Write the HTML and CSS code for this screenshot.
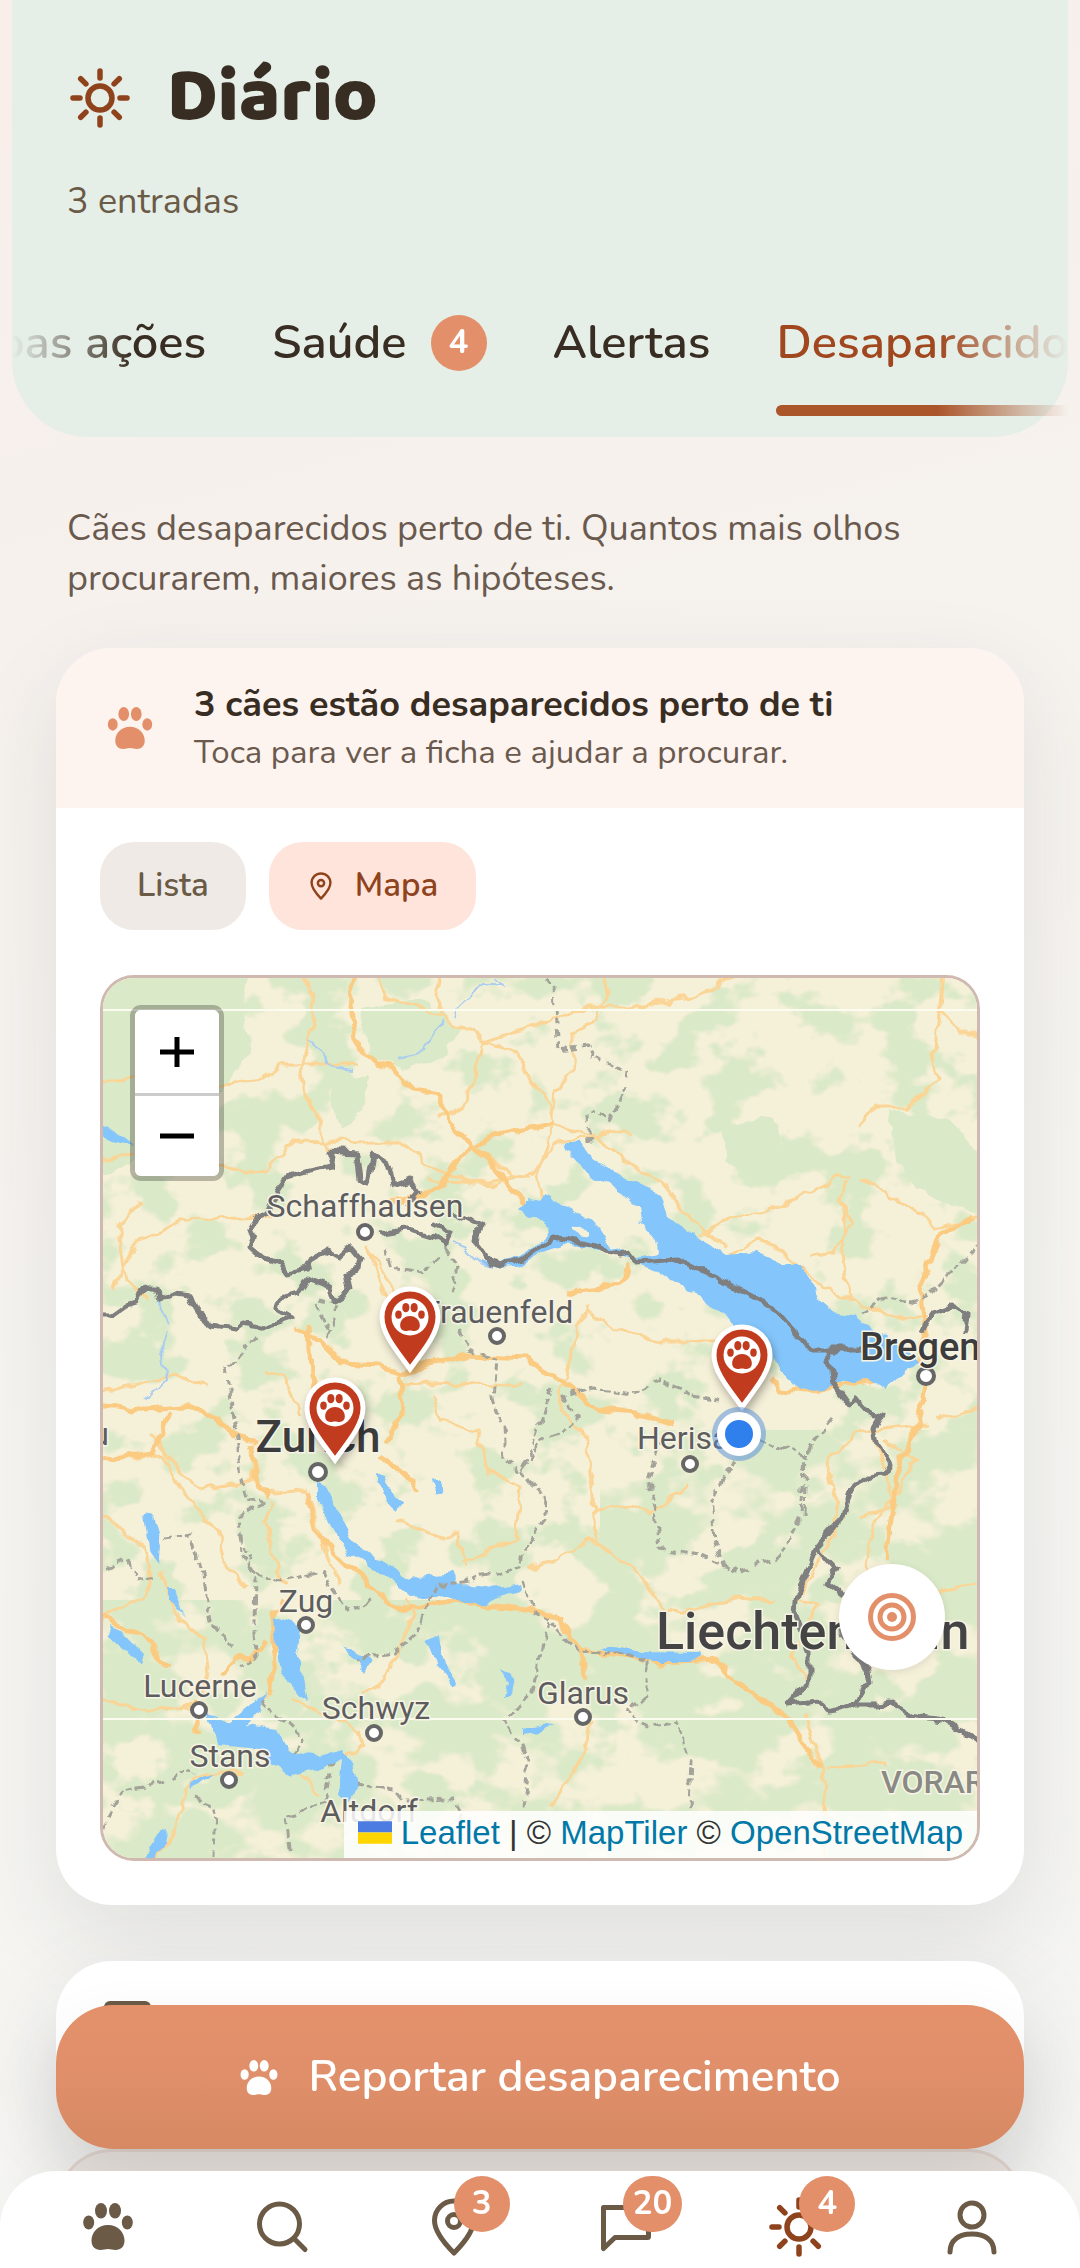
FILE: index.html
```
<!DOCTYPE html>
<html lang="pt">
<head>
    <meta charset="UTF-8">
    <meta name="viewport" content="width=device-width, initial-scale=1.0">
    <title>Diário</title>
    <link rel="stylesheet" href="styles.css">
</head>
<body>

<!-- shared icons -->
<svg class="sprite" width="0" height="0" aria-hidden="true">
    <symbol id="paw" viewBox="0 0 50 47">
        <ellipse cx="5.7" cy="19.500" rx="5.500" ry="7"/>
        <ellipse cx="18" cy="7.800" rx="6" ry="7.800"/>
        <ellipse cx="32" cy="7.800" rx="6" ry="7.800"/>
        <ellipse cx="44.300" cy="19.500" rx="5.500" ry="7"/>
        <path d="M25 22c10 0 16.500 7.500 16.500 15.500 0 6-3.500 9.500-9 9.500-3 0-5-1-7.500-1s-4.500 1-7.500 1c-5.500 0-9-3.500-9-9.500C8.500 29.500 15 22 25 22z"/>
    </symbol>
    <symbol id="sun" viewBox="-3 -3 66 66">
        <g fill="none" stroke="currentColor" stroke-width="5.500" stroke-linecap="round">
            <circle cx="30" cy="30" r="12"/>
            <path d="M30 3v7M30 50v7M3 30h7M50 30h7M10.700 10.700l5.200 5.200M44.100 44.100l5.200 5.200M10.700 49.300l5.200-5.200M44.100 15.900l5.200-5.200"/>
        </g>
    </symbol>
    <symbol id="pin" viewBox="0 0 46 58">
        <g fill="none" stroke="currentColor" stroke-width="5" stroke-linejoin="round">
            <path d="M23 55C14 46 3.500 34 3.500 22.500a19.500 19.500 0 0 1 39 0C42.500 34 32 46 23 55z"/>
            <circle cx="23" cy="23" r="6.500"/>
        </g>
    </symbol>
    <symbol id="marker" viewBox="0 0 62 88">
        <path d="M31 3C16 3 3 15 3 31c0 17 15 34 28 52 13-18 28-35 28-52C59 15 46 3 31 3z" fill="#c13b1f" stroke="#fff" stroke-width="5"/>
        <circle cx="31" cy="31" r="18.500" fill="#fff"/>
        <use href="#paw" x="16" y="17" width="30" height="28" fill="#c13b1f"/>
    </symbol>
</svg>

<div class="screen">
    <header class="header">
        <h1 class="header-title">
            <svg class="icon-sun"><use href="#sun"/></svg>
            Diário
        </h1>
        <p class="header-count">3 entradas</p>
        <nav class="tabs">
            <a class="tab" href="#acoes">Boas ações</a>
            <a class="tab" href="#saude">Saúde <span class="badge">4</span></a>
            <a class="tab" href="#alertas">Alertas</a>
            <a class="tab active" href="#desaparecidos">Desaparecidos</a>
        </nav>
    </header>

    <main class="content">
        <p class="intro">Cães desaparecidos perto de ti. Quantos mais olhos procurarem, maiores as hipóteses.</p>

        <section class="card">
            <div class="card-head">
                <svg class="card-paw"><use href="#paw"/></svg>
                <div>
                    <h2 class="card-title">3 cães estão desaparecidos perto de ti</h2>
                    <p class="card-sub">Toca para ver a ficha e ajudar a procurar.</p>
                </div>
            </div>
            <div class="card-body">
                <div class="pills">
                    <button class="pill" type="button">Lista</button>
                    <button class="pill selected" type="button">
                        <svg class="pill-pin"><use href="#pin"/></svg>
                        Mapa
                    </button>
                </div>

                <div class="map">
                    <svg class="map-canvas" viewBox="103 978 874 880" preserveAspectRatio="xMidYMid slice">
                        <defs>
                            <filter id="forest" x="0" y="0" width="100%" height="100%" color-interpolation-filters="sRGB">
                                <feTurbulence type="fractalNoise" baseFrequency="0.017 0.021" numOctaves="4" seed="8"/>
                                <feColorMatrix values="0 0 0 0 0.855  0 0 0 0 0.914  0 0 0 0 0.780  10 0 0 0 -5.1"/>
                            </filter>
                            <filter id="alps" x="0" y="0" width="100%" height="100%" color-interpolation-filters="sRGB">
                                <feTurbulence type="fractalNoise" baseFrequency="0.012 0.016" numOctaves="4" seed="21"/>
                                <feColorMatrix values="0 0 0 0 0.855  0 0 0 0 0.914  0 0 0 0 0.780  10 0 0 0 -4.5"/>
                            </filter>
                            <filter id="rough" filterUnits="userSpaceOnUse" x="93" y="968" width="894" height="900">
                                <feTurbulence type="fractalNoise" baseFrequency="0.06" numOctaves="2" seed="3"/>
                                <feDisplacementMap in="SourceGraphic" scale="12" xChannelSelector="R" yChannelSelector="G"/>
                            </filter>
                        </defs>
                        <rect x="103" y="978" width="874" height="880" fill="#f5f0d8"/>
                        <rect x="103" y="978" width="874" height="880" filter="url(#forest)"/>
                        <rect x="103" y="1600" width="874" height="258" filter="url(#alps)"/>
                        <rect x="600" y="1430" width="377" height="170" filter="url(#alps)"/>

                        <g filter="url(#rough)">
                            <g fill="#dae9c7">
                                <path d="M93 968h155l-8 40 12 40-30 42-60 60-69 30z"/>
                                <path d="M360 1010l62-12 40 30-20 30-40 10-32-12z"/>
                                <path d="M332 1085l36-12-4 40-24 14-10-22z"/>
                                <path d="M725 1125l50-10 8 40-32 22-26-16z"/>
                                <path d="M890 1110l60 10 37 40v60l-70-30-20-30z"/>
                            </g>
                            <g class="road">
                                <path d="M93 1085l50-10 60 12 58-8 20-15h75M93 1160l50-5 50 2 40 12 32 2 30-30 70 2 40 0 25 25 45 15 60-10 22-30 60-12 15 5"/>
                                <path d="M300 970l15 33-6 40-8 30 4 22 14 25 12 35M140 1200l-22 25 8 55 22 20M93 1395l80-20 35 10M112 1290l22-44 48-26 90-3"/>
                                <path d="M375 970l8 28 45 12 25 12 26 12 4 8 50-15 55-20h42l60-10 45-22 42-10M437 970l4 48"/>
                                <path d="M483 1042l-16 60-10 10-20 5M483 1042l34 10 14 30 20 25 2 20-5 20-10 30 4 25 14 10 25 20"/>
                                <path d="M607 970l-2 30-14 25-18 7v40l-18 20-3 25M553 1125l40 10 40 30 30 16 16 26 26 24 22 18"/>
                                <path d="M475 1148l36 28h20M511 1176l-14 8-70-4"/>
                                <path d="M700 1236l30-18 50-12 55-28 15-2M943 970l-4 45-6 50 5 15-25 22-10 5-30 0-17 20"/>
                                <path d="M939 1010l20 20 28 10M860 1178l60 36 15 15 52-14M847 1180l-6 22 10 20-18 30-25 5M845 1210l-4 45 10 45"/>
                                <path d="M800 1265l18 18 40 20 50 17 20-5M730 1255l28-14 25 10 15 14"/>
                                <path d="M587 1305l-16 50-12 40 8 20 18 20 8 60 2 50M585 1310l28 18 45 12h60"/>
                                <path d="M400 1385l60-2 65 4M435 1395l5 25 40 12 8 40 32 15-4 50-30 15-25 8M93 1460l70-5 25 45 30 30 10 40 20 18"/>
                                <path d="M365 1245l40 60M365 1245l20 50 6 10M263 1372l22 6 15 38"/>
                                <path d="M250 1445l4 35 12 15 38-6M254 1480l-55 10-50-55M93 1510l50 37 10 30-10 20-50 25M160 1570l20 50 25 20 4 30-8 25"/>
                                <path d="M275 1500l-10 20 10 40 10 25M310 1500l18 60 12 25M405 1600l10 15-25 55-10 15-20 10"/>
                                <path d="M395 1518l40 18h25l6 30M590 1540l-30 20-32 8M590 1540l45 28 30 40 15 5 55-15 40 3"/>
                                <path d="M590 1720l-4 30-18 30-20 28M595 1510l30-3 25 7 40-30"/>
                                <path d="M805 1715l18 55 4 50v48M827 1768l60-5M925 1423l-70 10-28 30 10 40-2 30-35 60M875 1437l20 70-35 10"/>
                                <path d="M885 1440l30 20-15 30-25 30-12 60-10 35M935 1420l52-14M940 1590l47-8M797 1600l20 5-8 20-18 30 15 25"/>
                                <path d="M93 1695l40 14 60-3M272 1690l-20 20M290 1700l40 15 28 15 5 15-20 12-40 12M300 1775l20 20M243 1773l-20-2-30 5-10 25-15 40-14 18"/>
                            </g>
                            <g class="road major">
                                <path d="M355 970l-4 38 7 40 20 15 15 5 20 22 25 4 12 30 30 28 30 35 22 22"/>
                                <path d="M473 1147l-22 20-8 20-25 10-30 4M473 1147l20-12 60-12"/>
                                <path d="M293 1328l25 10 25 25 35 2 25 8 25-10 40-8 55 3 35 20 22 18 20 14 35 3 40 12"/>
                                <path d="M400 1375l2 40-16 30M93 1403l40 8 50-4 22 3 30 25 20 8M93 1460l60-7 12-25 5-15M380 1455l30 25 10 12M250 1445l10 45 10 8"/>
                                <path d="M310 1325l2 50 12 40M305 1490l12 45 30 30 40 35 20 10 50-10 20 5 50 5 35 10"/>
                                <path d="M555 1615l25 35 6 30M580 1650l80 13 58-3 10 15 50 35 10 8 32 50"/>
                                <path d="M627 1263l-5 20-20 4-35 5M772 1378l8 12 28 2 60-12 50-20 8-30-6-40 12-35 10-22 30-15"/>
                                <path d="M930 1370l-14 60-18 40-12 90M195 1702l3 32M268 1695l8-50-2-30 10-15M220 1673l15-15 15 2 18-20M93 1612l50 25 25 30"/>
                            </g>

                            <g fill="#84c6fb">
                                <path d="M565 1150l2-7 13-1 13 18 24 13 16 7 27 13 7 24 30 20 30 18 30-3 26 12 17 1 12 18 5 17 13 12 23 3 20 12 24 16 20 20-20 12-9 15-18-10-30 2-17 8-23 2-20-19-10-20-30-26-27-20-16-14-30-16-24-12-6-8 20-4-2-13-15-17-2-16-16-15-29-15-20-17z"/>
                                <path d="M518 1207l12-8 8 2 5-6 24 12 33 20 13 20 17 8v4l-30-9-37-5-23 8-23 14-20 1-17-5v-4l17 5 23-9 24-16 6-10-20-13z"/>
                                <path d="M317 1482l10 5 10 26 16 30 27 17 30 18 43-5 4 10 33 5 32-5-2 7-40 15-17-2-16-8-37 3-30-26-30-19-13-20-20-33z"/>
                                <path d="M375 1473l9 3 18 29-5 6-7-6-15-22zM433 1480l7-2 6 14-8 5zM145 1513l7 2 10 32-2 18-10-15zM168 1588h7l10 29-15-17zM107 1623l13 7 23 23-3 9-30-22z"/>
                                <path d="M275 1617l25 10-2 26 10 47-26-23-5-30zM342 1648l15 2 13 13-5 10-10-14zM427 1643l13-8 2 15 6 20 10 15-4 3-17-21zM500 1670l13 7-3 20-6 0 3-14zM523 1728l30-6-13 11-17 2zM600 1650l10-5 30 7 60 1 2 5-12 5-37 0z"/>
                                <path d="M207 1713l23 9 35-29-5 17-13 15 30 5 10 20 33 7 23-7 9 13 5 24-9 16-10-6 4-37-19 7-26 8-27-12-10-14-43-4-4-20zM190 1780l23-8-20 15zM142 1860l18-27 7-3-2 13-12 17zM93 1120l42 24-18-3-24-8z"/>
                            </g>
                            <ellipse cx="580" cy="1231" rx="9" ry="4" fill="#f5f0d8" transform="rotate(25 580 1231)"/>
                            <path class="river" d="M495 978l8 8-20-2-12 14-12 8-4 10M310 1040l12 10 10 16 20 3M395 1058l30-6 10-20 10-10M452 1244l12 4 15 15 14 4M155 1300l14 22M168 1330l-6 25 4 25-20 20"/>

                            <g class="canton">
                                <path d="M540 970l14 18 2 40 2 22 30-4 4 12 20 8 14 8-3 22-14 24-14-10-8 6 2 28"/>
                                <path d="M860 1312l24-14 30 4 16-8 50-50M255 1335l-16 20-12 14 4 30 6 40 4 40 6 20 18 5-26 10 2 40 10 16 30 10 40-8 28 38 22-8"/>
                                <path d="M240 1535l15 40-1 50 4 30-18 14M165 1540l28-4 10 40 10 50 22 22M107 1568l20-8 10 20 20-4M385 1250l6 18 30 5 20-18M445 1248l14 20-8 25M320 1300l18 4-10 30-12-30"/>
                                <path d="M460 1330l10 20 26 8-3 40 10 30 2 30 16 14 20-30 24-12 14-14-16-18 30-10 40 6 25-14 30 14 30 6M552 1388l-20 60-10 20 20 30 4 20-22 30-4 20-60 15-22 0-12 20-8 30-24 20-40 6M524 1580l10 34 14 6 30 32 40 2 28 8v34l-20 14 20 16 30-6 14 40-2 50M548 1622l-16 70-28 30 24 40-4 46"/>
                                <path d="M660 1440l-12 40 8 30 4 38 40 6 40 18 40-16 20-40 4-60-50-20-30-20M736 1460l-26 40 4 40 10 26M804 1515l2-60 30-40M103 1826l20-36 40-8 30-12M195 1798l20 8-2 50M355 1785l40 6 8 10 50-2 10 20M290 1848l-4-30 40-15 6-40M262 1700l42 40-10 14"/>
                            </g>
                            <g class="border">
                                <path d="M93 1315h20l14-10 10-3 10-14h8l3 12 15-7 17 2 7 18 16 12 24 3 8-6 18 5 30-10-16-9 3-10 17-5 10-15 23 9 5 16 10-6 5-7-3-17 11-3 2-10-10-12-10 9-13-5-17 10-3 6-20 4-7-9-17-5-13-11 3-10-3-7 7-12 10-5 10-23 10-13 20-6 26-4-4-16 28 2 3 28 7 3 5-30 15 10 6 22 17-5 8 12-10 12M455 1214l25 13-5 13 15 23 10 3 23-8 30-20 47 9 20 8 10-2 7 9 43-3 93 48 37 43h50M380 1233l27-4 26 8 12 8 5-13-17-9"/>
                                <path d="M827 1350l6 32 19 25 5-7 8 10 17 5-7 12 3 16 12 20-7 12-16 2-17 16-7 24-26 30-20 46-2 20 15 40v27l-23 25 33-3 10 11 25-8 5-15 10-7-2-13-28-40M817 1547l18 21-8 15 15 12M855 1705l22 0 13-2 20 12 33 5 41 25M923 1333l10-20 17-6 17 6-2 20"/>
                            </g>
                        </g>

                        <!-- tile seams -->
                        <path d="M103 1010h874M103 1719h874" stroke="#fcfbf0" stroke-width="2"/>

                        <g class="towns">
                            <circle cx="365" cy="1232" r="7"/>
                            <circle cx="497" cy="1336" r="7"/>
                            <circle cx="318" cy="1472" r="8"/>
                            <circle cx="926" cy="1376" r="8"/>
                            <circle cx="690" cy="1464" r="7"/>
                            <circle cx="306" cy="1625" r="7"/>
                            <circle cx="199" cy="1710" r="7"/>
                            <circle cx="374" cy="1733" r="7"/>
                            <circle cx="229" cy="1780" r="7"/>
                            <circle cx="583" cy="1717" r="7"/>
                        </g>
                        <g class="labels">
                            <text x="365" y="1217" text-anchor="middle">Schaffhausen</text>
                            <text x="498" y="1323" text-anchor="middle">Frauenfeld</text>
                            <text x="637" y="1449">Herisau</text>
                            <text x="306" y="1612" text-anchor="middle">Zug</text>
                            <text x="200" y="1697" text-anchor="middle">Lucerne</text>
                            <text x="376" y="1719" text-anchor="middle">Schwyz</text>
                            <text x="230" y="1767" text-anchor="middle">Stans</text>
                            <text x="369" y="1822" text-anchor="middle">Altdorf</text>
                            <text x="583" y="1704" text-anchor="middle">Glarus</text>
                            <text x="109" y="1445" text-anchor="end">Aarau</text>
                            <text class="city big" x="318" y="1452" text-anchor="middle">Zurich</text>
                            <text class="city" x="860" y="1360">Bregenz</text>
                            <text class="country" x="656" y="1649">Liechtenstein</text>
                            <text class="region" x="881" y="1793">VORARLBERG</text>
                        </g>
                    </svg>

                    <button class="marker marker-winterthur" type="button" aria-label="Cão desaparecido"><svg><use href="#marker"/></svg></button>
                    <button class="marker marker-zurich" type="button" aria-label="Cão desaparecido"><svg><use href="#marker"/></svg></button>
                    <button class="marker marker-stgallen" type="button" aria-label="Cão desaparecido"><svg><use href="#marker"/></svg></button>
                    <span class="me"></span>

                    <div class="zoom">
                        <button class="zoom-btn" type="button" aria-label="Aproximar"><svg viewBox="0 0 34 34"><path d="M0 17h34M17 2v30"/></svg></button>
                        <button class="zoom-btn" type="button" aria-label="Afastar"><svg viewBox="0 0 34 34"><path d="M0 17h34"/></svg></button>
                    </div>

                    <button class="locate" type="button" aria-label="A minha localização">
                        <svg viewBox="0 0 48 48">
                            <circle cx="24" cy="24" r="21.500"/>
                            <circle cx="24" cy="24" r="12"/>
                            <circle class="dot" cx="24" cy="24" r="5"/>
                        </svg>
                    </button>

                    <div class="attribution">
                        <svg class="flag" viewBox="0 0 12 8"><path fill="#4C7BE1" d="M0 0h12v4H0z"/><path fill="#FFD500" d="M0 4h12v4H0z"/></svg>
                        <a href="#leaflet">Leaflet</a> | © <a href="#maptiler">MapTiler</a> © <a href="#osm">OpenStreetMap</a>
                    </div>
                </div>
            </div>
        </section>

        <section class="card card-next">
            <span class="card-next-icon"></span>
        </section>
        <section class="card card-last"></section>
    </main>

    <div class="dock">
        <button class="cta" type="button">
            <svg class="cta-paw"><use href="#paw"/></svg>
            Reportar desaparecimento
        </button>
        <nav class="bottom-nav">
            <a href="#inicio" aria-label="Início"><svg class="nav-paw"><use href="#paw"/></svg></a>
            <a href="#pesquisa" aria-label="Pesquisa">
                <svg class="nav-icon" viewBox="0 0 60 60"><circle cx="28.500" cy="27" r="20"/><path d="M43 41.500L54 52.500"/></svg>
            </a>
            <a href="#locais" aria-label="Locais"><svg class="nav-pin"><use href="#pin"/></svg><span class="badge">3</span></a>
            <a href="#mensagens" aria-label="Mensagens">
                <svg class="nav-icon" viewBox="0 0 60 60"><path d="M7.500 10.500h45v29a1 1 0 0 1-1 1H19L7.500 51.500z"/></svg>
                <span class="badge">20</span>
            </a>
            <a class="current" href="#diario" aria-label="Diário"><svg class="nav-icon nav-sun"><use href="#sun"/></svg><span class="badge">4</span></a>
            <a href="#perfil" aria-label="Perfil">
                <svg class="nav-icon" viewBox="0 0 60 60"><circle cx="30" cy="18" r="12"/><path d="M8 55c0-12 9-18 22-18s22 6 22 18"/></svg>
            </a>
        </nav>
    </div>
</div>

</body>
</html>
```
FILE: styles.css
```
* {
    box-sizing: border-box;
}

body, h1, h2, p {
    margin: 0;
}

body {
    font-family: Nunito, Lato, sans-serif;
    font-size: 36px;
    line-height: 50px;
    color: #382d22;
    background: #f6f1ec;
}

button {
    border: 0;
    padding: 0;
    font: inherit;
    color: inherit;
    cursor: pointer;
}

a {
    color: inherit;
    text-decoration: none;
}

svg {
    display: block;
    flex: none;
    fill: currentColor;
}

.sprite {
    position: absolute;
}

.screen {
    height: 100vh;
    overflow: hidden;
    background: linear-gradient(165deg, #f8eeea 0, #f6f1ed 25%, #f6f5f1 60%, #f4f4f2 100%);
}

/* header */
.header {
    margin: 0 12px;
    padding-top: 52px;
    border-radius: 0 0 76px 76px;
    background: #e5eee7;
}

.header-title {
    display: flex;
    align-items: center;
    gap: 34px;
    padding: 0 55px;
    font-family: "Baloo 2", "Noto Sans", sans-serif;
    font-size: 76px;
    line-height: 92px;
    font-weight: 800;
}

.icon-sun {
    width: 66px;
    height: 66px;
    color: #8f431c;
}

.header-count {
    margin-top: 33px;
    padding: 0 55px;
    color: #6a5a46;
}

.tabs {
    display: flex;
    gap: 66px;
    margin-top: 65px;
    padding-bottom: 21px;
    overflow: hidden;
    -webkit-mask-image: linear-gradient(90deg, transparent 0, #000 120px, #000 calc(100% - 130px), transparent);
    mask-image: linear-gradient(90deg, transparent 0, #000 120px, #000 calc(100% - 130px), transparent);
}

.tab {
    display: flex;
    flex: none;
    align-items: center;
    gap: 24px;
    height: 124px;
    padding-bottom: 12px;
    border-bottom: 11px solid transparent;
    font-size: 47px;
    font-weight: 600;
}

.tab:first-child {
    margin-left: -46px;
}

.tab.active {
    position: relative;
    color: #a0471f;
}

.tab.active::after {
    content: "";
    position: absolute;
    left: 0;
    right: 0;
    bottom: -11px;
    height: 11px;
    border-radius: 6px;
    background: #ab552b;
}

.badge {
    min-width: 56px;
    height: 56px;
    padding: 0 10px;
    border-radius: 28px;
    background: #e3906a;
    color: #fff;
    font-size: 33px;
    line-height: 56px;
    font-weight: 700;
    text-align: center;
}

/* content */
.content {
    padding: 67px 56px 0;
}

.intro {
    padding: 0 11px;
    color: #6a5a4e;
}

.card {
    margin-top: 44px;
    border-radius: 56px;
    background: #fff;
    box-shadow: 0 30px 90px rgba(40, 50, 60, .1);
}

.card-head {
    display: flex;
    align-items: center;
    gap: 41px;
    height: 160px;
    padding: 0 51px;
    border-radius: 56px 56px 0 0;
    background: #fdf3ef;
}

.card-paw {
    width: 46px;
    height: 42px;
    color: #e3906a;
}

.card-title {
    font-size: 36px;
    line-height: 50px;
    font-weight: 700;
}

.card-sub {
    font-size: 33px;
    line-height: 46px;
    color: #6a5a4e;
}

.card-body {
    padding: 34px 44px 44px;
}

.pills {
    display: flex;
    gap: 23px;
}

.pill {
    display: flex;
    align-items: center;
    gap: 22px;
    height: 88px;
    padding: 0 37px;
    border-radius: 34px;
    background: #efeae6;
    color: #6a5a46;
    font-size: 33px;
    font-weight: 600;
}

.pill.selected {
    padding: 0 38px 0 40px;
    background: #fee4da;
    color: #8f431c;
}

.pill-pin {
    width: 24px;
    height: 28px;
}

/* map */
.map {
    position: relative;
    margin-top: 45px;
    border: 3px solid #cfb9b0;
    border-radius: 34px;
    overflow: hidden;
}

.map-canvas {
    width: 100%;
    height: auto;
}

.road {
    fill: none;
    stroke: #fbd596;
    stroke-width: 3;
    stroke-linejoin: round;
}

.road.major {
    stroke: #fccb82;
    stroke-width: 5;
}

.river {
    fill: none;
    stroke: #a9cdf0;
    stroke-width: 2;
}

.canton {
    fill: none;
    stroke: #a3a39a;
    stroke-width: 3;
    stroke-dasharray: 7 4;
}

.border {
    fill: none;
    stroke: #7f7f7f;
    stroke-width: 5;
    stroke-linejoin: round;
}

.towns {
    fill: #fff;
    stroke: #666;
    stroke-width: 4;
}

.labels {
    fill: #5d5d5d;
    stroke: #f7f4e6;
    stroke-width: 3;
    paint-order: stroke;
    font-family: Roboto, sans-serif;
    font-size: 32px;
}

.labels .city {
    fill: #3c3c3c;
    font-size: 38px;
    font-weight: 500;
}

.labels .big {
    font-size: 44px;
}

.labels .country {
    fill: #444;
    font-size: 52px;
    font-weight: 500;
}

.labels .region {
    fill: #8a8a84;
    font-weight: 500;
}

.marker {
    position: absolute;
    width: 62px;
    height: 88px;
    background: none;
    filter: drop-shadow(2px 5px 4px rgba(0, 0, 0, .3));
}

.marker svg {
    width: 62px;
    height: 88px;
}

.marker-winterthur {
    left: 276px;
    top: 308px;
}

.marker-zurich {
    left: 201px;
    top: 399px;
}

.marker-stgallen {
    left: 608px;
    top: 346px;
}

.me {
    position: absolute;
    left: 614px;
    top: 434px;
    width: 44px;
    height: 44px;
    border: 8px solid #fff;
    border-radius: 50%;
    background: #2f80ed;
    box-shadow: 0 0 0 5px rgba(80, 140, 220, .5);
}

.zoom {
    position: absolute;
    left: 27px;
    top: 27px;
    border: 5px solid rgba(0, 0, 0, .25);
    border-radius: 11px;
    background-clip: padding-box;
    overflow: hidden;
}

.zoom-btn {
    display: flex;
    align-items: center;
    justify-content: center;
    width: 84px;
    height: 83px;
    background: #fff;
}

.zoom-btn + .zoom-btn {
    border-top: 3px solid #ccc;
}

.zoom-btn svg {
    width: 34px;
    height: 34px;
    stroke: #000;
    stroke-width: 5;
}

.locate {
    position: absolute;
    right: 32px;
    bottom: 188px;
    display: flex;
    align-items: center;
    justify-content: center;
    width: 106px;
    height: 106px;
    border-radius: 50%;
    background: #fff;
    box-shadow: 0 2px 8px rgba(0, 0, 0, .1);
    color: #e3906a;
}

.locate svg {
    width: 48px;
    height: 48px;
    fill: none;
    stroke: currentColor;
    stroke-width: 5;
}

.locate .dot {
    fill: currentColor;
    stroke: none;
}

.attribution {
    position: absolute;
    right: 0;
    bottom: 0;
    padding: 0 14px 3px;
    background: rgba(255, 255, 255, .85);
    font-family: "Liberation Sans", Arial, sans-serif;
    font-size: 33px;
    line-height: 44px;
    color: #333;
    white-space: nowrap;
}

.attribution a {
    color: #0078a8;
}

.flag {
    display: inline;
    width: 34px;
    height: 23px;
}

.card-next {
    height: 150px;
    margin-top: 56px;
    padding: 40px 48px;
}

.card-next-icon {
    display: block;
    width: 47px;
    height: 40px;
    border-radius: 6px;
    background: #6a5a46;
}

.card-last {
    height: 200px;
    margin-top: 38px;
    border: 3px solid #dfd2cb;
    background: #e8e2dd;
}

/* dock */
.dock {
    position: fixed;
    left: 0;
    right: 0;
    bottom: 0;
}

.cta {
    display: flex;
    align-items: center;
    justify-content: center;
    gap: 31px;
    width: calc(100% - 112px);
    height: 144px;
    margin: 0 56px 22px;
    border-radius: 58px;
    background: linear-gradient(#e4916b, #df8f6a 50%, #d68963);
    box-shadow: 0 36px 70px rgba(30, 35, 45, .12);
    color: #fff;
    font-size: 44px;
    font-weight: 600;
}

.cta-paw {
    width: 38px;
    height: 35px;
}

.bottom-nav {
    position: relative;
    display: flex;
    height: 97px;
    padding: 0 22px;
    border-radius: 56px 56px 0 0;
    background: #fff;
    color: #6a5a46;
}

.bottom-nav a {
    position: relative;
    display: flex;
    flex: 1;
    align-items: center;
    justify-content: center;
    padding-top: 14px;
}

.bottom-nav .current {
    color: #8f431c;
}

.bottom-nav .badge {
    position: absolute;
    right: calc(50% - 56px);
    top: 5px;
}

.nav-icon {
    width: 60px;
    height: 60px;
    fill: none;
    stroke: currentColor;
    stroke-width: 5;
    stroke-linecap: round;
    stroke-linejoin: round;
}

.nav-sun {
    width: 66px;
    height: 66px;
}

.nav-paw {
    width: 50px;
    height: 47px;
}

.nav-pin {
    width: 46px;
    height: 58px;
}
```
